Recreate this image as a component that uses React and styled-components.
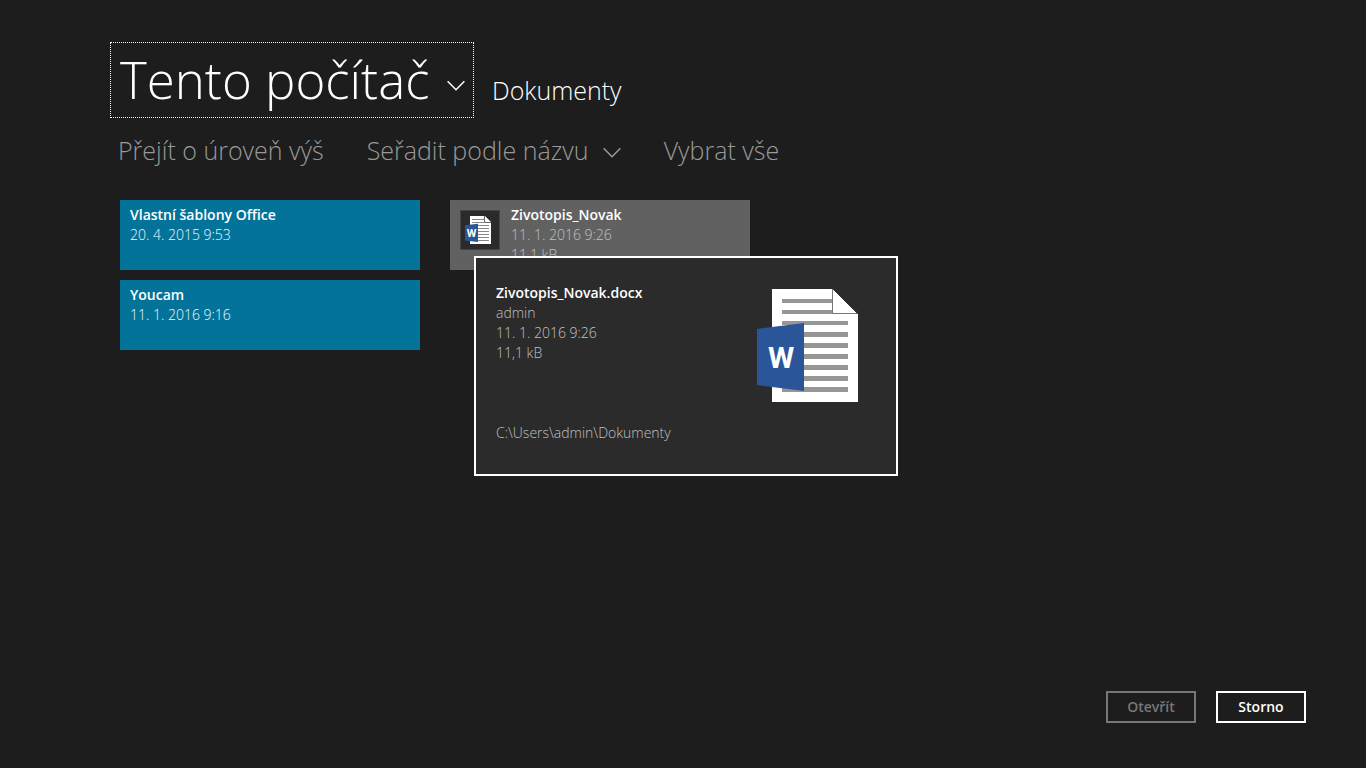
import React from 'react';
import styled, { createGlobalStyle } from 'styled-components';

const GlobalStyle = createGlobalStyle`
  * {
    box-sizing: border-box;
  }
  body {
    margin: 0;
    background: #1d1d1d;
    color: #fff;
    font-family: 'Open Sans', 'Noto Sans', sans-serif;
    font-size: 14px;
    line-height: 20px;
  }
  button, select {
    font-family: inherit;
    color: inherit;
  }
`;

const Page = styled.div`
  display: flex;
  flex-direction: column;
  min-height: 100vh;
  padding: 42px 60px 45px 110px;
`;

const Header = styled.header`
  display: flex;
  align-items: center;
  gap: 18px;
`;

const Dropdown = styled.div`
  display: grid;
  align-items: center;
  border: 1px dotted ${({ $focused }) => ($focused ? '#fff' : 'transparent')};

  select, svg {
    grid-area: 1 / 1;
  }
  svg {
    justify-self: end;
    margin-top: 6px;
    pointer-events: none;
  }
`;

const LocationDropdown = styled(Dropdown)`
  svg {
    margin: 12px 8px 0 0;
  }
`;

const Select = styled.select`
  appearance: none;
  border: 0;
  outline: 0;
  background: none;
  font-weight: 300;
  cursor: pointer;

  option {
    background: #2b2b2b;
    font-size: 14px;
  }
`;

const LocationSelect = styled(Select)`
  height: 74px;
  padding: 0 43px 2px 9px;
  font-size: 51px;
  line-height: 72px;
`;

const SortSelect = styled(Select)`
  height: 36px;
  padding: 0 32px 0 0;
  font-size: 25px;
  line-height: 36px;
`;

const Folder = styled.h1`
  margin: 20px 0 0;
  font-size: 25px;
  font-weight: 300;
  line-height: 36px;
`;

const Toolbar = styled.div`
  display: flex;
  align-items: center;
  flex-wrap: wrap;
  gap: 42px;
  margin: 13px 0 31px;
  padding-left: 8px;
  color: #999;
`;

const ToolbarButton = styled.button`
  height: 36px;
  padding: 0;
  border: 0;
  background: none;
  font-size: 25px;
  font-weight: 300;
  line-height: 36px;
  cursor: pointer;
`;

const Files = styled.main`
  display: flex;
  flex: 1;
  gap: 30px;
  padding-left: 10px;
`;

const Column = styled.div`
  display: flex;
  flex-direction: column;
  gap: 10px;
`;

const TileWrapper = styled.div`
  position: relative;
`;

const Tile = styled.button`
  display: flex;
  gap: 11px;
  width: 300px;
  height: 70px;
  padding: 5px 10px;
  border: 0;
  overflow: hidden;
  background: ${({ $folder }) => ($folder ? '#047399' : '#616161')};
  font-size: 14px;
  line-height: 20px;
  text-align: left;
  cursor: pointer;
`;

const Thumb = styled.span`
  display: flex;
  align-items: center;
  width: 40px;
  height: 40px;
  margin-top: 5px;
  padding-left: 4px;
  border: 1px solid #444;
  background: #2b2b2b;
`;

const Name = styled.span`
  display: block;
  color: #fff;
  font-weight: 600;
`;

const Detail = styled.span`
  display: block;
  color: ${({ $folder }) => ($folder ? '#eef8fb' : '#c0c0c0')};
  font-weight: 300;
`;

const Tooltip = styled.div`
  position: absolute;
  top: 56px;
  left: 24px;
  display: flex;
  justify-content: space-between;
  width: 424px;
  height: 220px;
  padding: 25px 38px 31px 20px;
  border: 2px solid #fff;
  background: #2b2b2b;

  > svg {
    margin-top: 6px;
  }
`;

const TooltipText = styled.div`
  display: flex;
  flex-direction: column;
`;

const Path = styled(Detail)`
  margin-top: auto;
`;

const IconLetter = styled.text`
  fill: #fff;
  font-family: Roboto, sans-serif;
  font-size: ${({ $size }) => $size}px;
  font-weight: 700;
  text-anchor: middle;
`;

const Footer = styled.footer`
  display: flex;
  justify-content: flex-end;
  gap: 20px;
`;

const FooterButton = styled.button`
  width: 90px;
  height: 32px;
  padding: 0;
  border: 2px solid #fff;
  background: none;
  font-size: 14px;
  font-weight: 600;
  line-height: 20px;
  cursor: pointer;

  &:disabled {
    border-color: #777;
    color: #777;
    cursor: default;
  }
`;

const Chevron = () => (
  <svg width="18" height="12" viewBox="0 0 18 12" fill="none" stroke="currentColor" strokeWidth="1.5" aria-hidden="true">
    <path d="M0.6 1.2 L9 9.8 L17.4 1.2" />
  </svg>
);

const LINES = [43, 54, 65, 76, 87];

const WordIcon = () => (
  <svg width="101" height="113" viewBox="0 0 101 113" aria-hidden="true">
    <path d="M15 0 H76 L101 25 V113 H15 Z" fill="#fff" />
    <path d="M25 10 H75.5 V14 H25 Z M25 21 H75.5 V25 H25 Z M25 32 H91 V36 H25 Z M25 98 H91 V103 H25 Z" fill="#969696" />
    {LINES.map(y => <path key={y} d={`M25 ${y} H91 V${y + 5} H25 Z`} fill="#969696" />)}
    <path d="M75.5 0 V24.5 H101" fill="#fff" stroke="#555" strokeWidth="0.8" />
    <path d="M76 0 L101 25" stroke="#2b2b2b" />
    <path d="M0 40 L47 34 V102 L0 96 Z" fill="#2a5599" />
    <IconLetter x="24" y="79" $size={30}>W</IconLetter>
  </svg>
);

const SMALL_LINES = [9, 12, 15, 18, 21, 24];

const SmallWordIcon = () => (
  <svg width="26" height="28" viewBox="0 0 26 28" aria-hidden="true">
    <path d="M5 0 H20 L26 6 V28 H5 Z" fill="#fff" />
    <path d="M7 3 H19 V4 H7 Z M7 6 H19 V7 H7 Z" fill="#888" />
    {SMALL_LINES.map(y => <path key={y} d={`M7 ${y} H24 V${y + 1} H7 Z`} fill="#888" />)}
    <path d="M19.5 0 V6.5 H26" fill="none" stroke="#444" strokeWidth="0.8" />
    <path d="M0 9.2 L13 7.8 V26 L0 24.6 Z" fill="#2a5599" />
    <IconLetter x="6.5" y="21" $size={11}>W</IconLetter>
  </svg>
);

const folders = [
  { name: 'Vlastní šablony Office', date: '20. 4. 2015 9:53' },
  { name: 'Youcam', date: '11. 1. 2016 9:16' },
];

const file = {
  name: 'Zivotopis_Novak',
  extension: '.docx',
  author: 'admin',
  date: '11. 1. 2016 9:26',
  size: '11,1 kB',
  path: 'C:\\Users\\admin\\Dokumenty',
};

const FolderTile = ({ name, date }) => (
  <Tile type="button" $folder>
    <span>
      <Name>{name}</Name>
      <Detail $folder>{date}</Detail>
    </span>
  </Tile>
);

const FileTile = ({ name, extension, author, date, size, path }) => (
  <TileWrapper>
    <Tile type="button" aria-describedby="file-tooltip">
      <Thumb><SmallWordIcon /></Thumb>
      <span>
        <Name>{name}</Name>
        <Detail>{date}</Detail>
        <Detail>{size}</Detail>
      </span>
    </Tile>
    <Tooltip role="tooltip" id="file-tooltip">
      <TooltipText>
        <Name>{name}{extension}</Name>
        <Detail>{author}</Detail>
        <Detail>{date}</Detail>
        <Detail>{size}</Detail>
        <Path>{path}</Path>
      </TooltipText>
      <WordIcon />
    </Tooltip>
  </TileWrapper>
);

export default function App() {
  return (
    <Page>
      <GlobalStyle />
      <Header>
        <LocationDropdown $focused>
          <LocationSelect aria-label="Umístění">
            <option>Tento počítač</option>
          </LocationSelect>
          <Chevron />
        </LocationDropdown>
        <Folder>Dokumenty</Folder>
      </Header>
      <Toolbar>
        <ToolbarButton type="button">Přejít o úroveň výš</ToolbarButton>
        <Dropdown>
          <SortSelect aria-label="Řazení">
            <option>Seřadit podle názvu</option>
          </SortSelect>
          <Chevron />
        </Dropdown>
        <ToolbarButton type="button">Vybrat vše</ToolbarButton>
      </Toolbar>
      <Files>
        <Column>
          {folders.map(folder => <FolderTile key={folder.name} {...folder} />)}
        </Column>
        <Column>
          <FileTile {...file} />
        </Column>
      </Files>
      <Footer>
        <FooterButton type="button" disabled>Otevřít</FooterButton>
        <FooterButton type="button">Storno</FooterButton>
      </Footer>
    </Page>
  );
}
